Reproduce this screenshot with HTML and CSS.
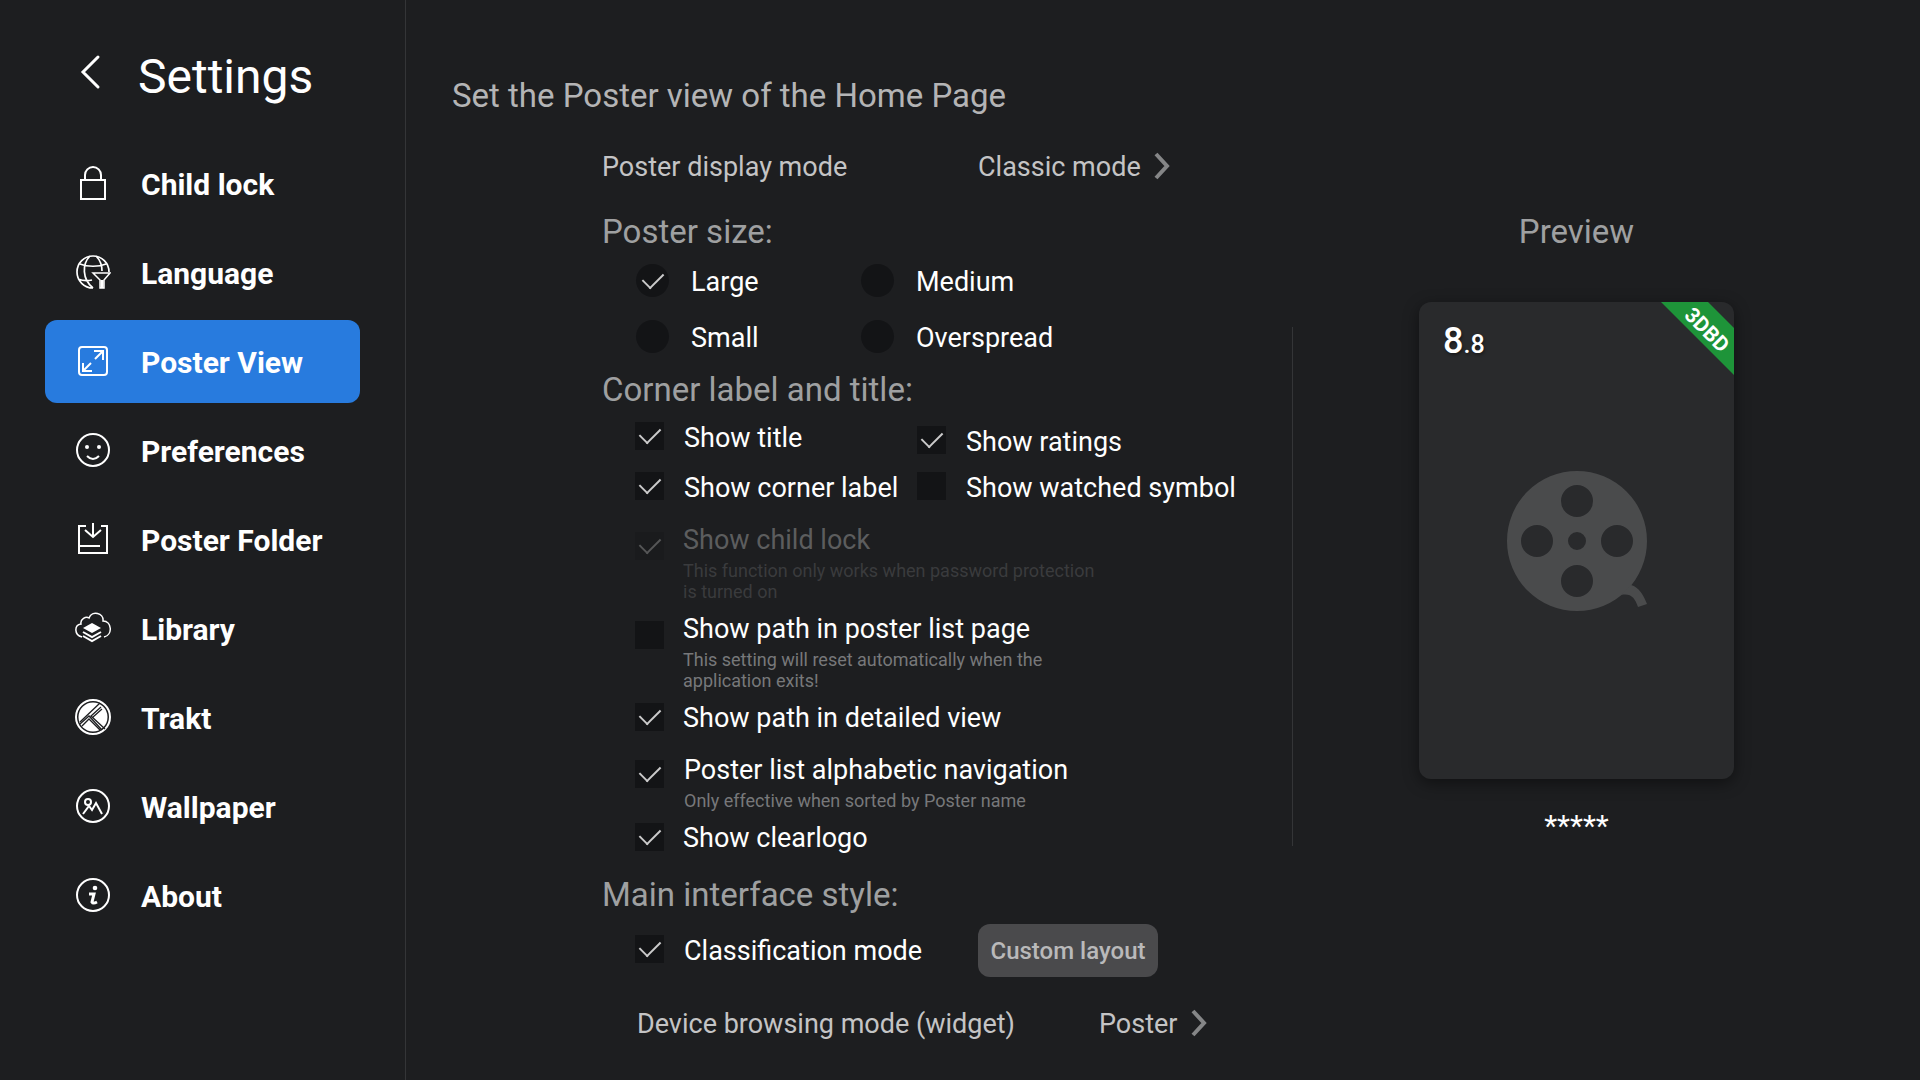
FILE: index.html
```html
<!DOCTYPE html>
<html lang="en">
<head>
    <meta charset="UTF-8">
    <meta name="viewport" content="width=device-width, initial-scale=1.0">
    <title>Settings</title>
    <link rel="stylesheet" href="styles.css">
</head>
<body>
    <aside id="sidebar">
        <header id="sidebar-header">
            <button type="button" id="back" aria-label="Back">
                <svg width="36" height="36" viewBox="0 0 36 36"><path d="M23 3 8 18 23 33" stroke-width="3" stroke-linecap="round"/></svg>
            </button>
            <h1>Settings</h1>
        </header>
        <nav>
            <a href="#child-lock">
                <svg width="36" height="36" viewBox="0 0 36 36" stroke-width="2"><path d="M6 15H30V34H6ZM10 15V10a8 8 0 0 1 16 0V15"/></svg>
                Child lock
            </a>
            <a href="#language">
                <svg width="36" height="36" viewBox="0 0 36 36" stroke-width="2">
                    <path d="M18 34A16 16 0 1 1 34 18M18 34C7 25 7 10 15 2M21 2C25 6 27 12 27 17M5 10C12 13 24 13 31 10M3 25C8 27 13 27 17 26" stroke-width="1.7"/>
                    <path d="M18 19H35L29 26V34H25V26Z" stroke-width="1.5"/>
                    <path d="M27 26V34" stroke-width="3"/>
                </svg>
                Language
            </a>
            <a href="#poster-view" class="active">
                <svg width="36" height="36" viewBox="0 0 36 36" stroke-width="2">
                    <rect x="4" y="4" width="28" height="28" rx="3"/>
                    <path d="M19 8H28V17M28 8 20 16M8 20V28H17M8 28 16 20"/>
                </svg>
                Poster View
            </a>
            <a href="#preferences">
                <svg width="36" height="36" viewBox="0 0 36 36" stroke-width="2">
                    <circle cx="18" cy="18" r="16"/>
                    <path d="M12 24Q18 30 24 24"/>
                    <circle class="fill" cx="12" cy="15" r="2"/>
                    <circle class="fill" cx="24" cy="15" r="2"/>
                </svg>
                Preferences
            </a>
            <a href="#poster-folder">
                <svg width="36" height="36" viewBox="0 0 36 36" stroke-width="2"><path d="M11 5H4V32H32V5H26M18 2V16M10 9 18 16 26 9M4 25H25"/></svg>
                Poster Folder
            </a>
            <a href="#library">
                <svg width="36" height="36" viewBox="0 0 36 36">
                    <path d="M7 27C-1 25-1 15 6 14C5 9 11 6 14 8C17 0 29 3 28 11C37 11 38 25 29 27" stroke-width="1.5"/>
                    <path class="fill" d="M17 13 26 18 17 23 8 18Z"/>
                    <path d="M8 22 17 27 26 22M8 26 17 31 26 26" stroke-width="2"/>
                </svg>
                Library
            </a>
            <a href="#trakt">
                <svg width="36" height="36" viewBox="0 0 36 36">
                    <circle cx="18" cy="18" r="17" stroke-width="2"/>
                    <circle class="fill" cx="18" cy="18" r="14.5"/>
                    <path class="cut" d="M25 4 5 23M26 8 16 17 30 30M27 10 18 18M5 25 14 17 27 31M7 27 14 20 25 31"/>
                </svg>
                Trakt
            </a>
            <a href="#wallpaper">
                <svg width="36" height="36" viewBox="0 0 36 36" stroke-width="2">
                    <circle cx="18" cy="18" r="16"/>
                    <circle cx="13" cy="14" r="3"/>
                    <path d="M8 26 14 18 17 22 21 15 27 26"/>
                </svg>
                Wallpaper
            </a>
            <a href="#about">
                <svg width="36" height="36" viewBox="0 0 36 36">
                    <circle cx="18" cy="18" r="16" stroke-width="2"/>
                    <circle class="fill" cx="20" cy="11" r="2.3"/>
                    <path d="M14 17H19L17 25Q18 27 22 25" stroke-width="3"/>
                </svg>
                About
            </a>
        </nav>
    </aside>

    <main>
        <h2>Set the Poster view of the Home Page</h2>
        <div id="columns">
            <form id="options">
                <div class="select-row">
                    <span class="name">Poster display mode</span>
                    <button type="button" class="select">Classic mode
                        <svg width="18" height="28" viewBox="0 0 18 28"><path d="M3 2 14 14 3 26" stroke-width="4"/></svg>
                    </button>
                </div>

                <h3>Poster size:</h3>
                <div id="sizes">
                    <label><input type="radio" name="size" checked>Large</label>
                    <label><input type="radio" name="size">Medium</label>
                    <label><input type="radio" name="size">Small</label>
                    <label><input type="radio" name="size">Overspread</label>
                </div>

                <h3>Corner label and title:</h3>
                <div id="labels">
                    <div class="label-column">
                        <label class="option"><input type="checkbox" checked>Show title</label>
                        <label class="option"><input type="checkbox" checked>Show corner label</label>
                    </div>
                    <div class="label-column second">
                        <label class="option"><input type="checkbox" checked>Show ratings</label>
                        <label class="option"><input type="checkbox">Show watched symbol</label>
                    </div>
                </div>
                <div id="paths">
                    <label class="option noted disabled">
                        <input type="checkbox" checked disabled>
                        <span>Show child lock<small>This function only works when password protection is turned on</small></span>
                    </label>
                    <label class="option noted">
                        <input type="checkbox">
                        <span>Show path in poster list page<small>This setting will reset automatically when the application exits!</small></span>
                    </label>
                    <label class="option"><input type="checkbox" checked>Show path in detailed view</label>
                    <label class="option noted navigation">
                        <input type="checkbox" checked>
                        <span>Poster list alphabetic navigation<small>Only effective when sorted by Poster name</small></span>
                    </label>
                    <label class="option"><input type="checkbox" checked>Show clearlogo</label>
                </div>

                <h3>Main interface style:</h3>
                <div id="style-row">
                    <label class="option"><input type="checkbox" checked>Classification mode</label>
                    <button type="button" id="custom-layout">Custom layout</button>
                </div>
                <div class="select-row widget">
                    <span class="name">Device browsing mode (widget)</span>
                    <button type="button" class="select">Poster
                        <svg width="18" height="28" viewBox="0 0 18 28"><path d="M3 2 14 14 3 26" stroke-width="4"/></svg>
                    </button>
                </div>
            </form>

            <div id="divider"></div>

            <section id="preview">
                <h3>Preview</h3>
                <div id="poster">
                    <span id="rating">8<small>.8</small></span>
                    <svg id="ribbon" width="73" height="73" viewBox="0 0 73 73">
                        <polygon points="0,0 47,0 73,26 73,73"/>
                        <text x="0" y="0" transform="translate(41 33) rotate(45)">3DBD</text>
                    </svg>
                    <svg id="reel" width="140" height="140" viewBox="0 0 140 140">
                        <path fill-rule="evenodd" d="M70 0a70 70 0 1 0 0 140a70 70 0 1 0 0-140ZM70 14a16 16 0 1 1 0 32a16 16 0 1 1 0-32ZM70 94a16 16 0 1 1 0 32a16 16 0 1 1 0-32ZM30 54a16 16 0 1 1 0 32a16 16 0 1 1 0-32ZM110 54a16 16 0 1 1 0 32a16 16 0 1 1 0-32ZM70 61a9 9 0 1 1 0 18a9 9 0 1 1 0-18Z"/>
                        <path d="M124 114C132 116 137 125 140 133L131 136C128 127 124 122 114 124Z"/>
                    </svg>
                </div>
                <p>*****</p>
            </section>
        </div>
    </main>
</body>
</html>
```

FILE: styles.css
```css
* {
    box-sizing: border-box;
}

body {
    display: flex;
    min-height: 100vh;
    margin: 0;
    background-color: #1d1e20;
    color: #fff;
    font-family: Roboto, sans-serif;
    font-size: 27px;
    line-height: 31px;
}

h1, h2, h3, p {
    margin: 0;
    font-weight: 400;
}

svg {
    flex: none;
    fill: none;
    stroke: currentColor;
}

button {
    padding: 0;
    border: none;
    background: none;
    color: inherit;
    font: inherit;
    cursor: pointer;
}

/* Sidebar */
#sidebar {
    flex: none;
    width: 406px;
    padding: 49px 45px 0;
    border-right: 1px solid #343537;
}

#sidebar-header {
    display: flex;
    align-items: flex-start;
    gap: 27px;
    margin-bottom: 37px;
    padding-left: 30px;
}

#back {
    height: 46px;
    width: 36px;
}

#back svg {
    display: block;
}

h1 {
    font-size: 48px;
    line-height: 56px;
}

nav {
    display: flex;
    flex-direction: column;
    gap: 6px;
}

nav a {
    display: flex;
    align-items: flex-start;
    gap: 30px;
    height: 83px;
    padding: 23px 0 0 30px;
    border-radius: 12px;
    color: #fff;
    font-size: 30px;
    font-weight: 700;
    line-height: 39px;
    text-decoration: none;
}

nav a.active {
    background-color: #287bde;
}

nav .fill {
    fill: currentColor;
    stroke: none;
}

nav .cut {
    stroke: #1d1e20;
    stroke-width: 1.3;
}

/* Main area */
main {
    flex: 1;
    padding: 76px 60px 40px 46px;
}

h2 {
    color: #b4b4b5;
    font-size: 33px;
    line-height: 40px;
}

h3 {
    color: #9fa0a1;
    font-size: 33px;
    line-height: 40px;
}

#columns {
    display: flex;
    align-items: flex-start;
    padding-left: 150px;
}

#options {
    flex: none;
    width: 690px;
    padding-top: 34px;
}

.select-row {
    display: flex;
    align-items: flex-start;
    margin-bottom: 28px;
    color: #c4c4c5;
    line-height: 34px;
}

.select-row .name {
    width: 376px;
}

.select-row.widget {
    margin: 30px 0 0 35px;
}

.select-row.widget .name {
    width: 462px;
}

.select {
    display: flex;
    align-items: flex-start;
    gap: 12px;
}

.select svg {
    margin-top: 2px;
    color: #858687;
}

#sizes {
    display: grid;
    grid-template-columns: 225px 225px;
    row-gap: 20px;
    margin: 12px 0 14px 34px;
}

#sizes label {
    display: flex;
    align-items: flex-start;
    gap: 22px;
    line-height: 36px;
}

input {
    position: relative;
    flex: none;
    appearance: none;
    width: 29px;
    height: 28px;
    margin: 0;
    background-color: #131416;
}

input[type="radio"] {
    width: 33px;
    height: 33px;
    border-radius: 50%;
}

/* tick mark */
input:checked::before {
    content: "";
    position: absolute;
    left: 9px;
    top: 1px;
    width: 10px;
    height: 18px;
    border: solid #cbcbcb;
    border-width: 0 2px 2px 0;
    transform: rotate(45deg);
}

input[type="radio"]:checked::before {
    left: 11px;
    top: 4px;
}

#labels {
    display: flex;
    margin: 12px 0 20px 33px;
    line-height: 33px;
}

.label-column {
    display: flex;
    flex-direction: column;
    gap: 17px;
    width: 282px;
}

.label-column.second {
    gap: 13px;
    padding-top: 4px;
}

.option {
    display: flex;
    align-items: flex-start;
    gap: 20px;
    white-space: nowrap;
}

.option.noted input {
    margin-top: 7px;
}

.option span {
    width: 420px;
    padding-bottom: 1px;
}

.option small {
    display: block;
    margin-top: 4px;
    color: #77787a;
    font-size: 18px;
    line-height: 21px;
    white-space: normal;
}

.option.disabled {
    color: #5c5d5e;
}

.option.disabled input {
    background-color: #1a1b1d;
}

.option.disabled input::before {
    border-color: #555657;
}

.option.disabled small {
    color: #3a3b3d;
}

#paths {
    display: flex;
    flex-direction: column;
    gap: 11px;
    margin: 0 0 21px 33px;
}

#paths .option {
    gap: 19px;
}

#paths .option.navigation {
    gap: 20px;
    margin-top: 10px;
}

.option.navigation input {
    margin-top: 5px;
}

#style-row {
    display: flex;
    align-items: flex-start;
    margin: 9px 0 0 33px;
    line-height: 33px;
}

#style-row .option {
    width: 343px;
    padding-top: 11px;
}

#custom-layout {
    width: 180px;
    height: 53px;
    padding-top: 2px;
    border-radius: 12px;
    background-color: #4a4a4c;
    color: #b9b9ba;
    font-size: 24px;
    font-weight: 500;
}

/* Preview */
#divider {
    flex: none;
    width: 1px;
    height: 519px;
    margin-top: 211px;
    background-color: #343537;
}

#preview {
    display: flex;
    flex: 1;
    flex-direction: column;
    align-items: center;
    padding-top: 96px;
}

#poster {
    position: relative;
    display: flex;
    align-items: center;
    justify-content: center;
    width: 315px;
    height: 477px;
    margin: 50px 0 29px;
    border-radius: 12px;
    background-color: #292a2c;
    box-shadow: 0 4px 16px rgba(0, 0, 0, 0.45);
}

#rating {
    position: absolute;
    left: 24px;
    top: 21px;
    font-size: 36px;
    font-weight: 500;
    line-height: 36px;
    text-shadow: 1px 2px 3px rgba(0, 0, 0, 0.4);
}

#rating small {
    font-size: 25px;
}

#ribbon {
    position: absolute;
    right: 0;
    top: 0;
    overflow: visible;
}

#ribbon polygon {
    fill: #1e9439;
    stroke: none;
}

#ribbon text {
    fill: #fff;
    stroke: none;
    font-size: 21px;
    font-weight: 700;
    text-anchor: middle;
}

#reel {
    fill: #4a4b4c;
    stroke: none;
}

#preview p {
    font-size: 30px;
    line-height: 36px;
}
```
